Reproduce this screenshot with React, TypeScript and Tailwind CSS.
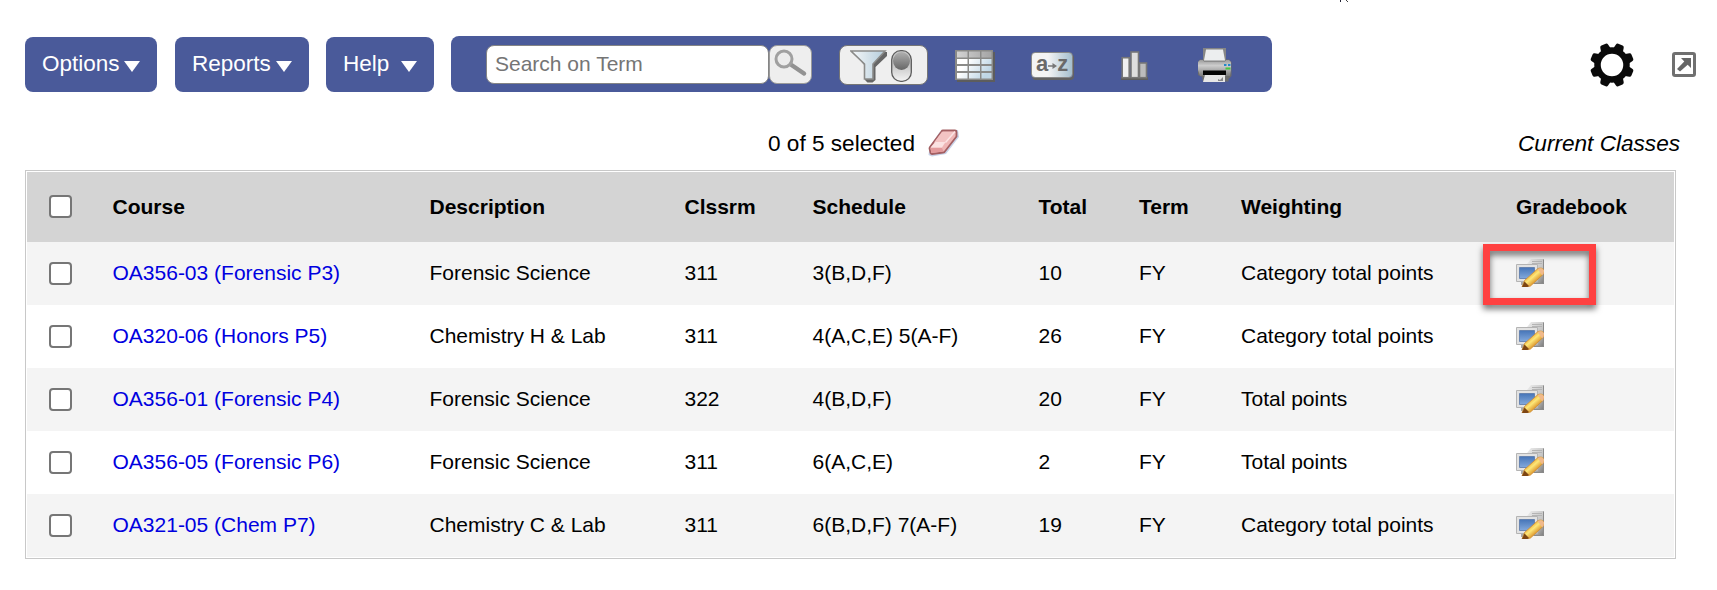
import { useState } from "react";

interface ClassRow {
  course: string;
  description: string;
  room: string;
  schedule: string;
  total: number;
  term: string;
  weighting: string;
}

const rows: ClassRow[] = [
  { course: "OA356-03 (Forensic P3)", description: "Forensic Science", room: "311", schedule: "3(B,D,F)", total: 10, term: "FY", weighting: "Category total points" },
  { course: "OA320-06 (Honors P5)", description: "Chemistry H & Lab", room: "311", schedule: "4(A,C,E) 5(A-F)", total: 26, term: "FY", weighting: "Category total points" },
  { course: "OA356-01 (Forensic P4)", description: "Forensic Science", room: "322", schedule: "4(B,D,F)", total: 20, term: "FY", weighting: "Total points" },
  { course: "OA356-05 (Forensic P6)", description: "Forensic Science", room: "311", schedule: "6(A,C,E)", total: 2, term: "FY", weighting: "Total points" },
  { course: "OA321-05 (Chem P7)", description: "Chemistry C & Lab", room: "311", schedule: "6(B,D,F) 7(A-F)", total: 19, term: "FY", weighting: "Category total points" },
];

const gridCols =
  "grid grid-cols-[85.5px_317px_255px_128px_226px_100.5px_102px_275px_158px] items-center";

function MenuButton({ label, className }: { label: string; className: string }) {
  return (
    <button
      className={`mt-px flex h-[55px] items-center justify-between rounded-lg bg-[#4a5a9a] pr-[17px] pl-[17px] text-[22.5px] leading-none text-white ${className}`}
    >
      <span>{label}</span>
      <svg width="16" height="11" viewBox="0 0 16 11" className="mt-1">
        <path d="M0 0h16L8 11z" fill="#fff" />
      </svg>
    </button>
  );
}

function SearchIcon() {
  return (
    <svg width="34" height="30" viewBox="0 0 34 30">
      <path d="M17.500 16 30 24.500" stroke="#929292" strokeWidth="4.500" strokeLinecap="round" />
      <circle cx="10" cy="10" r="8" fill="#ececec" stroke="#a0a0a0" strokeWidth="3" />
    </svg>
  );
}

function FunnelIcon() {
  return (
    <svg width="37" height="33" viewBox="0 0 37 33">
      <defs>
        <linearGradient id="funnel" x1="0" x2="1">
          <stop offset="0" stopColor="#f6f8f9" />
          <stop offset="1" stopColor="#b4ccdb" />
        </linearGradient>
      </defs>
      <path d="M3 2h34v4L25.500 17v13l-3 2.500h-5l-2.500-2.500V16z" fill="#666" />
      <path d="M1 1h34L23 14v15h-8.500V14z" fill="url(#funnel)" stroke="#8b8b89" strokeWidth="1.600" />
    </svg>
  );
}

function ToggleIcon() {
  return (
    <svg width="21" height="32" viewBox="0 0 21 32">
      <defs>
        <linearGradient id="knob" x1="0" y1="0" x2="0" y2="1">
          <stop offset="0" stopColor="#b0b0b0" />
          <stop offset="1" stopColor="#666" />
        </linearGradient>
        <linearGradient id="track" x1="0" y1="0" x2="0" y2="1">
          <stop offset="0.500" stopColor="#c8c8c8" />
          <stop offset="1" stopColor="#f4f4f4" />
        </linearGradient>
      </defs>
      <rect x="0.700" y="0.700" width="19.600" height="30.600" rx="9" fill="url(#track)" stroke="#5c5c5c" strokeWidth="1.300" />
      <ellipse cx="10.500" cy="11" rx="8.500" ry="9" fill="url(#knob)" />
    </svg>
  );
}

function TableIcon() {
  return (
    <svg width="40" height="32" viewBox="0 0 40 32">
      <defs>
        <linearGradient id="cells" x1="0" x2="1" y1="0" y2="0.400">
          <stop offset="0.300" stopColor="#fff" />
          <stop offset="1" stopColor="#bfd6e5" />
        </linearGradient>
        <linearGradient id="cellsHead" x1="0" x2="1">
          <stop offset="0" stopColor="#d2d2d2" />
          <stop offset="1" stopColor="#a4a4a4" />
        </linearGradient>
      </defs>
      <path d="M2 2h38v30H2z" fill="#5d5d5d" />
      <path d="M0 0h38v30H0z" fill="#8a8a88" />
      <path d="M2 1.500h10.500v6H2zM14 1.500h11v6H14zM26.500 1.500h10v6h-10z" fill="url(#cellsHead)" />
      <path
        d="M2 9h10.500v5H2zM14 9h11v5H14zM26.500 9h10v5h-10zM2 16h10.500v5H2zM14 16h11v5H14zM26.500 16h10v5h-10zM2 23h10.500v5.500H2zM14 23h11v5.500H14zM26.500 23h10v5.500h-10z"
        fill="url(#cells)"
      />
    </svg>
  );
}

function SortBadge() {
  return (
    <span className="flex h-[26px] w-[42px] items-center justify-center rounded-[4px] border border-[#888] bg-linear-to-r from-[#f4f4f4] from-40% to-[#a5bfce] pb-[3px] text-[22px] leading-none font-bold text-[#6a6a6a] shadow-[1px_2px_0_#626262]">
      a
      <svg width="9" height="10" viewBox="0 0 9 10" className="mt-1">
        <path d="M0 5h7" stroke="#777" strokeWidth="1.500" />
        <path d="M4.500 2v6L9 5z" fill="#777" />
      </svg>
      z
    </span>
  );
}

function ChartIcon() {
  return (
    <svg width="28" height="29" viewBox="0 0 28 29">
      <path d="M0 26h27v3H0z" fill="#5d5d5d" />
      <rect x="1.200" y="6.700" width="7" height="20" fill="#f0f0f0" stroke="#777" strokeWidth="1.600" />
      <rect x="10" y="1" width="7.500" height="25.700" fill="#dedede" stroke="#777" strokeWidth="1.600" />
      <rect x="18.500" y="12" width="7" height="14.700" fill="#bcbcbc" stroke="#777" strokeWidth="1.600" />
    </svg>
  );
}

function PrinterIcon() {
  return (
    <svg width="36" height="34" viewBox="0 0 36 34">
      <defs>
        <linearGradient id="printer" x1="0" y1="0" x2="0" y2="1">
          <stop offset="0" stopColor="#9c9c9c" />
          <stop offset="0.350" stopColor="#cdcdcd" />
          <stop offset="1" stopColor="#7c7c7c" />
        </linearGradient>
      </defs>
      <path d="M6 0h23v13H6z" fill="#858585" />
      <path d="M9 1.500h17l2 11H7z" fill="#eceeef" />
      <path d="M3 11.500h3l1 1.500h21l1-1.500h3l2.500 2.500v14l-3 3v2.500H6L5 29l-4-2V14z" fill="#6c6c6c" />
      <path d="M1 14l2-2h3l1 1.500h21l1-1.500h3l2 2v8l-1 6H3l-2-6z" fill="url(#printer)" />
      <path d="M6 22.500h23v4.500H6z" fill="#050505" />
      <path d="M8 27h20v7H6z" fill="#e6e6e6" />
      <path d="M21 33h5v-4l-3 3-2-1z" fill="#888" />
      <path d="M27 16h2.500v2H27zM31 16h2.500v2H31z" fill="#2487c9" />
      <path d="M28.500 19.500h5v2h-5z" fill="#47c93e" />
    </svg>
  );
}

function GearIcon() {
  const teeth = [22.5, 67.5, 112.5, 157.5, 202.5, 247.5, 292.5, 337.5];
  return (
    <svg width="44" height="44" viewBox="-22 -22 44 44">
      {teeth.map((angle) => (
        <path
          key={angle}
          d="M-5.300-15-4.200-20.500Q-3.800-22-2.300-22H2.300Q3.800-22 4.200-20.500L5.300-15z"
          fill="#0a0a0a"
          transform={`rotate(${angle})`}
        />
      ))}
      <circle r="14.500" fill="none" stroke="#0a0a0a" strokeWidth="6.500" />
    </svg>
  );
}

function PopOutIcon() {
  return (
    <svg width="24" height="25" viewBox="0 0 24 25">
      <rect x="1.500" y="1.500" width="21" height="22" rx="1.500" fill="#fff" stroke="#707070" strokeWidth="3" />
      <path d="M9 6h10v10l-3.300-3.300L8 19.500 5 17l7.300-7.500z" fill="#666" />
    </svg>
  );
}

function EraserIcon() {
  return (
    <svg width="31" height="28" viewBox="0 0 31 28">
      <path d="M12 2.500 30 1l1 7-13 17-14 2.500L.5 26l1-8z" fill="#c8d3e8" />
      <path d="M13.500 2.500Q14 1.500 15 1.500H27q1.500 0 1.500 1.500v4.500L16.500 23q-.5.500-1.500.5L4 25q-1 0-1.500-1l-1-4.500q0-.8.500-1.500z" fill="#efb6b6" stroke="#a35f62" strokeWidth="1.800" />
      <path d="M14 2.800h12L17.500 13.500H6z" fill="#f3c3c3" />
      <path d="m2.500 18.500 5-5.500h10L14 18.500z" fill="#fbe2e2" />
      <path d="M2.500 19H14l1.500 3.500-12 1.500z" fill="#e39a9c" />
      <path d="m17.500 13.500 9.500-11" stroke="#fbe4e4" strokeWidth="1.500" />
    </svg>
  );
}

function GradebookIcon() {
  return (
    <svg width="28" height="28" viewBox="0 0 28 28" className="block">
      <defs>
        <linearGradient id="caseFill" x1="0" y1="0" x2="1" y2="1">
          <stop offset="0" stopColor="#eee" />
          <stop offset="0.600" stopColor="#c4c4c4" />
          <stop offset="1" stopColor="#777" />
        </linearGradient>
        <linearGradient id="screenFill" x1="0" y1="0" x2="0" y2="1">
          <stop offset="0" stopColor="#4675b8" />
          <stop offset="1" stopColor="#83a9dc" />
        </linearGradient>
        <linearGradient id="pencilFill" x1="0.300" y1="0.300" x2="0.700" y2="0.700">
          <stop offset="0" stopColor="#e8a32e" />
          <stop offset="0.450" stopColor="#fde779" />
          <stop offset="1" stopColor="#d98c22" />
        </linearGradient>
      </defs>
      <path d="M15 0h13v25H15l-4-20z" fill="url(#caseFill)" />
      <path d="M16 2.500h10M16 4.500h10" stroke="#b4b4b4" />
      <path d="M27.500.5v24H18" fill="none" stroke="#8b8b8b" />
      <path d="M.5 5.500h21v17H.5z" fill="#e2e2e2" stroke="#b4b4b4" />
      <path d="M3.500 8.500h15v11h-15z" fill="url(#screenFill)" stroke="#5a79a8" strokeWidth="0.800" />
      <path d="M5 23h9v3H5z" fill="#aaa" />
      <path d="M8.500 21.500 22 9.500Q26.500 8 28 11.500L27.500 15 14.500 27l-4 1H6z" fill="url(#pencilFill)" stroke="#d18d31" strokeWidth="0.800" />
      <path d="M21.500 10Q26 8 28 11.500L27.500 15 26 16.300z" fill="#f0b98c" />
      <path d="m8.500 22.500 4.500 4.500-1.500 1H6z" fill="#7d4513" />
    </svg>
  );
}

function Check({ checked, onChange }: { checked: boolean; onChange: () => void }) {
  return (
    <input
      type="checkbox"
      checked={checked}
      onChange={onChange}
      className="mt-px ml-[22px] block size-[23px] appearance-none rounded-[4px] border-2 border-[#767676] bg-white checked:bg-[#0075ff]"
    />
  );
}

export default function App() {
  const [selected, setSelected] = useState<string[]>([]);

  const toggle = (course: string) =>
    setSelected((prev) =>
      prev.includes(course) ? prev.filter((c) => c !== course) : [...prev, course]
    );

  const toggleAll = () =>
    setSelected(selected.length === rows.length ? [] : rows.map((r) => r.course));

  return (
    <div className="h-[590px] w-[1717px] overflow-hidden bg-white font-['Liberation_Sans',Arial,sans-serif] text-black">
      {/* tail of the line that is scrolled off the top */}
      <div className="h-9 pl-[1340px]">
        <svg width="10" height="2" viewBox="0 0 10 2" className="block">
          <path d="M0 0h1v2H0z" fill="#223" />
          <path d="m6 0 2 2" stroke="#444" />
        </svg>
      </div>

      <header className="flex h-14 pl-[25px]">
        <MenuButton label="Options" className="w-[132px]" />
        <MenuButton label="Reports" className="ml-[18px] w-[134px]" />
        <MenuButton label="Help" className="ml-[17px] w-[108px]" />

        <div className="ml-[17px] flex w-[821px] items-start rounded-lg bg-[#4a5a9a] pt-[9px] pl-[35px]">
          <input
            placeholder="Search on Term"
            className="h-[39px] w-[283px] rounded-lg border border-[#858585] bg-white pb-0.5 pl-2 text-[21px] placeholder:text-[#757575]"
          />
          <button className="flex h-[39px] w-[43px] justify-center rounded-lg border border-[#9a9a9a] bg-[#eee] pt-[3px]">
            <SearchIcon />
          </button>
          <button className="ml-[27px] flex h-10 w-[89px] rounded-lg border border-[#767676] bg-[#efefef] pt-1 pl-2.5">
            <FunnelIcon />
            <span className="ml-[4px]">
              <ToggleIcon />
            </span>
          </button>
          <div className="mt-[5px] ml-[27px]">
            <TableIcon />
          </div>
          <div className="mt-[7px] ml-[36px]">
            <SortBadge />
          </div>
          <div className="mt-[6px] ml-[48px]">
            <ChartIcon />
          </div>
          <div className="mt-[3px] ml-[48px]">
            <PrinterIcon />
          </div>
        </div>

        <div className="mt-[7px] ml-[318px]">
          <GearIcon />
        </div>
        <div className="mt-4 ml-[38px]">
          <PopOutIcon />
        </div>
      </header>

      <div className="flex h-[78px] items-center pt-[26px] pl-[768px] text-[22.6px] leading-none">
        <span className="w-[160px]">{selected.length} of 5 selected</span>
        <button onClick={() => setSelected([])} className="-mt-0.5">
          <EraserIcon />
        </button>
        <span className="ml-auto pr-[37px] italic">Current Classes</span>
      </div>

      <main className="ml-[25px] h-[389px] w-[1651px] border border-[#c8c8c8] p-px text-[21px] leading-none">
        <div className={`${gridCols} h-[70px] bg-[#d4d4d4] pb-0.5 font-bold [&>span]:mt-px`}>
          <Check checked={selected.length === rows.length} onChange={toggleAll} />
          <span>Course</span>
          <span>Description</span>
          <span>Clssrm</span>
          <span>Schedule</span>
          <span>Total</span>
          <span>Term</span>
          <span>Weighting</span>
          <span>Gradebook</span>
        </div>
        {rows.map((row, i) => (
          <div
            key={row.course}
            className={`${gridCols} relative h-[63px] pb-px odd:bg-white even:bg-[#f4f4f4] [&>a]:-mt-px [&>span]:-mt-px`}
          >
            <Check checked={selected.includes(row.course)} onChange={() => toggle(row.course)} />
            <a className="cursor-pointer text-[#0000e0]">{row.course}</a>
            <span>{row.description}</span>
            <span>{row.room}</span>
            <span>{row.schedule}</span>
            <span>{row.total}</span>
            <span>{row.term}</span>
            <span>{row.weighting}</span>
            <GradebookIcon />
            {i === 0 && (
              <div className="absolute top-0.5 left-[1456px] z-10 h-[61px] w-[113px] border-7 border-[#ff4141] drop-shadow-[0_4px_3px_rgba(0,0,0,0.55)]" />
            )}
          </div>
        ))}
      </main>
    </div>
  );
}
